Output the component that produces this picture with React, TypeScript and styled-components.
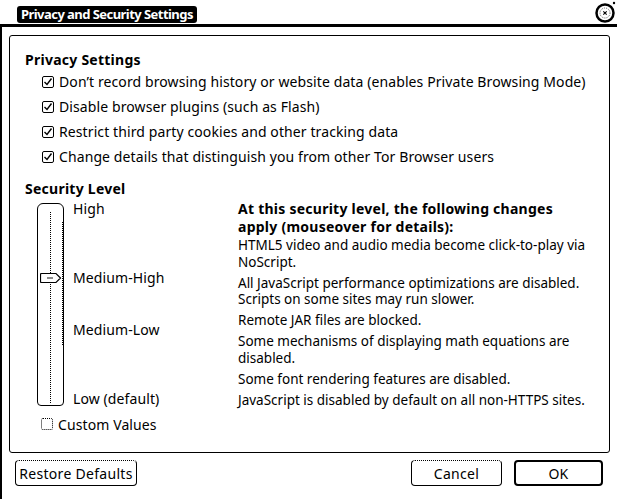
import React from "react";
import styled, { createGlobalStyle } from "styled-components";

const Global = createGlobalStyle`
  html, body { margin: 0; padding: 0; background: #fff; }
  body { font-family: "Noto Sans", "DejaVu Sans", sans-serif; color: #000; }
  * { box-sizing: border-box; }
`;

const Window = styled.div`
  width: 617px;
  height: 499px;
  display: flex;
  flex-direction: column;
  background: #fff;
  overflow: hidden;
`;

const TitleBar = styled.div`
  height: 27px;
  border-bottom: 3px solid #000;
  display: flex;
  align-items: center;
  justify-content: space-between;
  padding: 0 0 0 17px;
  flex-shrink: 0;
`;

const Title = styled.div`
  background: #000;
  color: #fff;
  font-weight: 700;
  font-size: 13px;
  line-height: 17px;
  padding: 0 4px;
  border-radius: 3px;
  letter-spacing: -0.55px;
  margin-top: 4px;
`;

const Body = styled.div`
  flex: 1;
  border-left: 2px solid #000;
  display: flex;
  flex-direction: column;
  padding: 8px 7px 0 7px;
`;

const Panel = styled.div`
  height: 418px;
  border: 1px solid #000;
  border-radius: 3px;
  padding: 15px 0 0 15px;
  display: flex;
  flex-direction: column;
`;

const SectionTitle = styled.div<{ $top?: number }>`
  font-weight: 700;
  font-size: 14px;
  line-height: 18px;
  letter-spacing: 0.25px;
  margin-top: ${(p) => p.$top ?? 0}px;
`;

const CheckRow = styled.div`
  height: 25px;
  display: flex;
  align-items: center;
  gap: 5px;
  padding-left: 17px;
  font-size: 14px;
  letter-spacing: 0.1px;
`;

const SecurityArea = styled.div`
  display: flex;
  margin-top: 2px;
`;

const SliderSide = styled.div`
  display: flex;
  width: 213px;
  padding-left: 12px;
  gap: 9px;
`;

const Trough = styled.div`
  position: relative;
  width: 27px;
  height: 203px;
  margin-top: 3px;
  border: 1px solid #000;
  border-radius: 6px 6px 4px 4px;
`;

const CenterLine = styled.div`
  position: absolute;
  left: 12px;
  top: 8px;
  bottom: 2px;
  border-left: 1px dotted #000;
`;

const TickLine = styled.div`
  position: absolute;
  right: 0px;
  top: 18px;
  bottom: 60px;
  border-right: 1px dotted #000;
`;

const Handle = styled.svg`
  position: absolute;
  left: 2px;
  top: 68px;
`;

const Labels = styled.div`
  display: flex;
  flex-direction: column;
  font-size: 14px;
  letter-spacing: 0.1px;
`;

const Label = styled.div<{ $top: number }>`
  line-height: 18px;
  margin-top: ${(p) => p.$top}px;
`;

const Changes = styled.div`
  width: 352px;
  display: flex;
  flex-direction: column;
  gap: 4.5px;
  font-size: 13.5px;
  letter-spacing: 0px;
`;

const ChangesHead = styled.div`
  font-weight: 700;
  font-size: 14px;
  line-height: 18px;
  letter-spacing: 0.25px;
  margin-bottom: -3.5px;
`;

const Change = styled.div`
  line-height: 16.5px;
`;

const CustomRow = styled.div`
  display: flex;
  align-items: center;
  gap: 5px;
  padding-left: 16px;
  margin-top: 7px;
  height: 18px;
  font-size: 14px;
  letter-spacing: 0.1px;
`;

const EmptyBox = styled.span`
  width: 12px;
  height: 12px;
  border: 1px dotted #000;
  border-radius: 2px;
  display: inline-block;
`;

const Footer = styled.div`
  display: flex;
  align-items: center;
  padding: 7px 7px 0 6px;
  gap: 12px;
`;

const Button = styled.button<{ $w: number; $default?: boolean }>`
  width: ${(p) => p.$w}px;
  height: 26px;
  font-family: "Noto Sans", "DejaVu Sans", sans-serif;
  font-size: 14px;
  letter-spacing: 0.3px;
  color: #000;
  background: #fff;
  border: ${(p) => (p.$default ? 2 : 1)}px solid #000;
  border-top-style: ${(p) => (p.$default ? "solid" : "dotted")};
  border-radius: 4px;
  padding: 0;
  display: flex;
  align-items: center;
  justify-content: center;
`;

const Spacer = styled.div`
  flex: 1;
`;

const Check = () => (
  <svg width="12" height="12" viewBox="0 0 12 12">
    <rect x="0.5" y="0.5" width="11" height="11" rx="1.5" fill="none" stroke="#000" strokeWidth="1" />
    <path d="M2.5 6 L5 8.5 L9.5 2.5" fill="none" stroke="#000" strokeWidth="1.4" />
  </svg>
);

const CloseIcon = () => (
  <svg width="22" height="24" viewBox="0 0 22 24">
    <circle cx="10" cy="13" r="8.5" fill="#fff" stroke="#000" strokeWidth="2.5" />
    <circle cx="10" cy="13" r="5" fill="none" stroke="#000" strokeWidth="0.6" strokeDasharray="1 1" />
    <path d="M8.3 11.3 L11.7 14.7 M11.7 11.3 L8.3 14.7" stroke="#000" strokeWidth="1.1" />
    <circle cx="19" cy="3" r="1.2" fill="#000" />
  </svg>
);

const privacy = [
  "Don’t record browsing history or website data (enables Private Browsing Mode)",
  "Disable browser plugins (such as Flash)",
  "Restrict third party cookies and other tracking data",
  "Change details that distinguish you from other Tor Browser users",
];

const changes = [
  "HTML5 video and audio media become click-to-play via NoScript.",
  "All JavaScript performance optimizations are disabled. Scripts on some sites may run slower.",
  "Remote JAR files are blocked.",
  "Some mechanisms of displaying math equations are disabled.",
  "Some font rendering features are disabled.",
  "JavaScript is disabled by default on all non-HTTPS sites.",
];

export default function App() {
  return (
    <>
      <Global />
      <Window>
        <TitleBar>
          <Title>Privacy and Security Settings</Title>
          <CloseIcon />
        </TitleBar>
        <Body>
          <Panel>
            <SectionTitle>Privacy Settings</SectionTitle>
            {privacy.map((t) => (
              <CheckRow key={t}>
                <Check />
                <span>{t}</span>
              </CheckRow>
            ))}
            <SectionTitle $top={11}>Security Level</SectionTitle>
            <SecurityArea>
              <SliderSide>
                <Trough>
                  <CenterLine />
                  <TickLine />
                  <Handle width="22" height="12" viewBox="0 0 22 12">
                    <path d="M1.5 1.5 H16 L20.5 6 L16 10.5 H1.5 Q0.5 10.5 0.5 9.5 V2.5 Q0.5 1.5 1.5 1.5 Z" fill="#fff" stroke="#000" strokeWidth="1.2" />
                    <path d="M8 5 V7 M10 5 V7 M12 5 V7" stroke="#000" strokeWidth="0.9" />
                  </Handle>
                </Trough>
                <Labels>
                  <Label $top={0}>High</Label>
                  <Label $top={51}>Medium-High</Label>
                  <Label $top={34}>Medium-Low</Label>
                  <Label $top={51}>Low (default)</Label>
                </Labels>
              </SliderSide>
              <Changes>
                <ChangesHead>At this security level, the following changes apply (mouseover for details):</ChangesHead>
                {changes.map((c) => (
                  <Change key={c}>{c}</Change>
                ))}
              </Changes>
            </SecurityArea>
            <CustomRow>
              <EmptyBox />
              <span>Custom Values</span>
            </CustomRow>
          </Panel>
          <Footer>
            <Button $w={122}>Restore Defaults</Button>
            <Spacer />
            <Button $w={91}>Cancel</Button>
            <Button $w={89} $default>OK</Button>
          </Footer>
        </Body>
      </Window>
    </>
  );
}
